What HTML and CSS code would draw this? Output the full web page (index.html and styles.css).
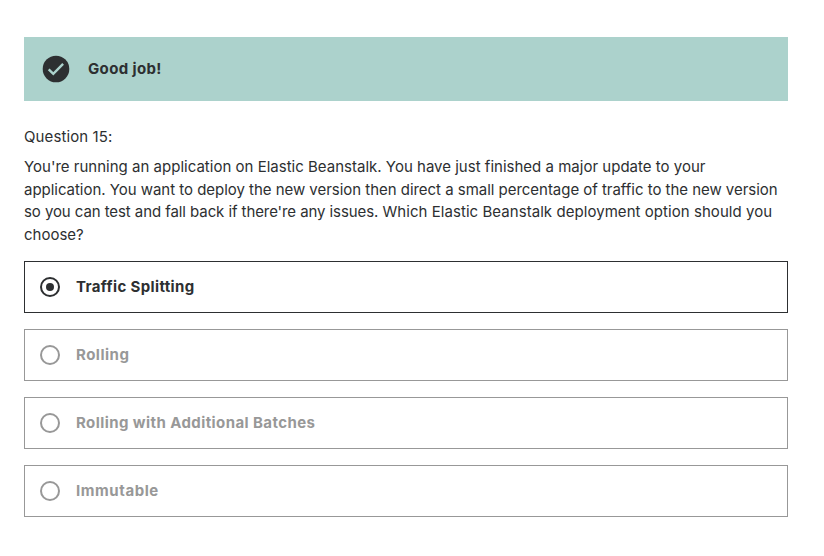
FILE: index.html
```
<!DOCTYPE html>
<html lang="en">
<head>
<meta charset="utf-8">
<title>Quiz – Question 15</title>
<link rel="stylesheet" href="styles.css">
</head>
<body>
<main class="quiz">
  <div class="alert">
    <svg class="alert-icon" viewBox="0 0 28 28" aria-hidden="true"><circle cx="14" cy="14" r="13.3" fill="#2d2f31"/><path d="M6.7 14.3l4.6 4.6 9.8-10" fill="none" stroke="#acd2cc" stroke-width="2.4"/></svg>
    <span class="alert-title">Good job!</span>
  </div>
  <div class="number">Question 15:</div>
  <div class="prompt">
    <div class="line-1">You're running an application on Elastic Beanstalk. You have just finished a major update to your</div>
    <div class="line-2">application. You want to deploy the new version then direct a small percentage of traffic to the new version</div>
    <div class="line-3"><span class="tight">so you can test and fall back if there're any issues. </span>Which Elastic Beanstalk deployment option should you</div>
    <div>choose?</div>
  </div>
  <div class="answers">
    <label class="answer selected"><span class="radio"></span><span class="answer-text option-1">Traffic Splitting</span></label>
    <label class="answer"><span class="radio"></span><span class="answer-text option-2">Rolling</span></label>
    <label class="answer"><span class="radio"></span><span class="answer-text option-3">Rolling with Additional Batches</span></label>
    <label class="answer"><span class="radio"></span><span class="answer-text option-4">Immutable</span></label>
  </div>
</main>
</body>
</html>
```

FILE: styles.css
```
* { box-sizing: border-box; }
body {
  margin: 0;
  background: #fff;
  color: #2d2f31;
  font-family: Inter, "Liberation Sans", sans-serif;
  font-size: 15px;
}
.quiz { padding: 37px 36px 0 24px; }
.alert {
  display: flex;
  align-items: center;
  height: 64px;
  padding-left: 18px;
  background: #acd2cc;
  font-weight: 700;
}
.alert-icon { width: 28px; height: 28px; margin-right: 18px; }
.alert-title { padding-bottom: 2px; letter-spacing: 0.36px; }
.number { margin-top: 25px; line-height: 22px; letter-spacing: 0.1px; }
.prompt { margin-top: 8px; line-height: 22.6px; white-space: nowrap; }
.line-1 { letter-spacing: 0.01px; }
.line-2 { letter-spacing: -0.03px; }
.line-3 { letter-spacing: 0.055px; }
.tight { letter-spacing: -0.08px; }
.answers {
  display: flex;
  flex-direction: column;
  gap: 16px;
  margin-top: 15px;
}
.answer {
  display: flex;
  align-items: center;
  gap: 16px;
  height: 52px;
  padding-left: 15px;
  border: 1px solid #989898;
  color: #989898;
  font-weight: 700;
}
.answer.selected { border-color: #2d2f31; color: #2d2f31; }
.answer-text { padding-bottom: 2px; }
.option-1 { letter-spacing: 0.36px; }
.option-2 { letter-spacing: 0.5px; }
.option-3 { letter-spacing: 0.42px; }
.option-4 { letter-spacing: 0.58px; }
.radio {
  display: grid;
  place-items: center;
  width: 20px;
  height: 20px;
  border: 2px solid currentColor;
  border-radius: 50%;
}
.selected .radio::after {
  content: "";
  width: 8px;
  height: 8px;
  border-radius: 50%;
  background: currentColor;
}
```
